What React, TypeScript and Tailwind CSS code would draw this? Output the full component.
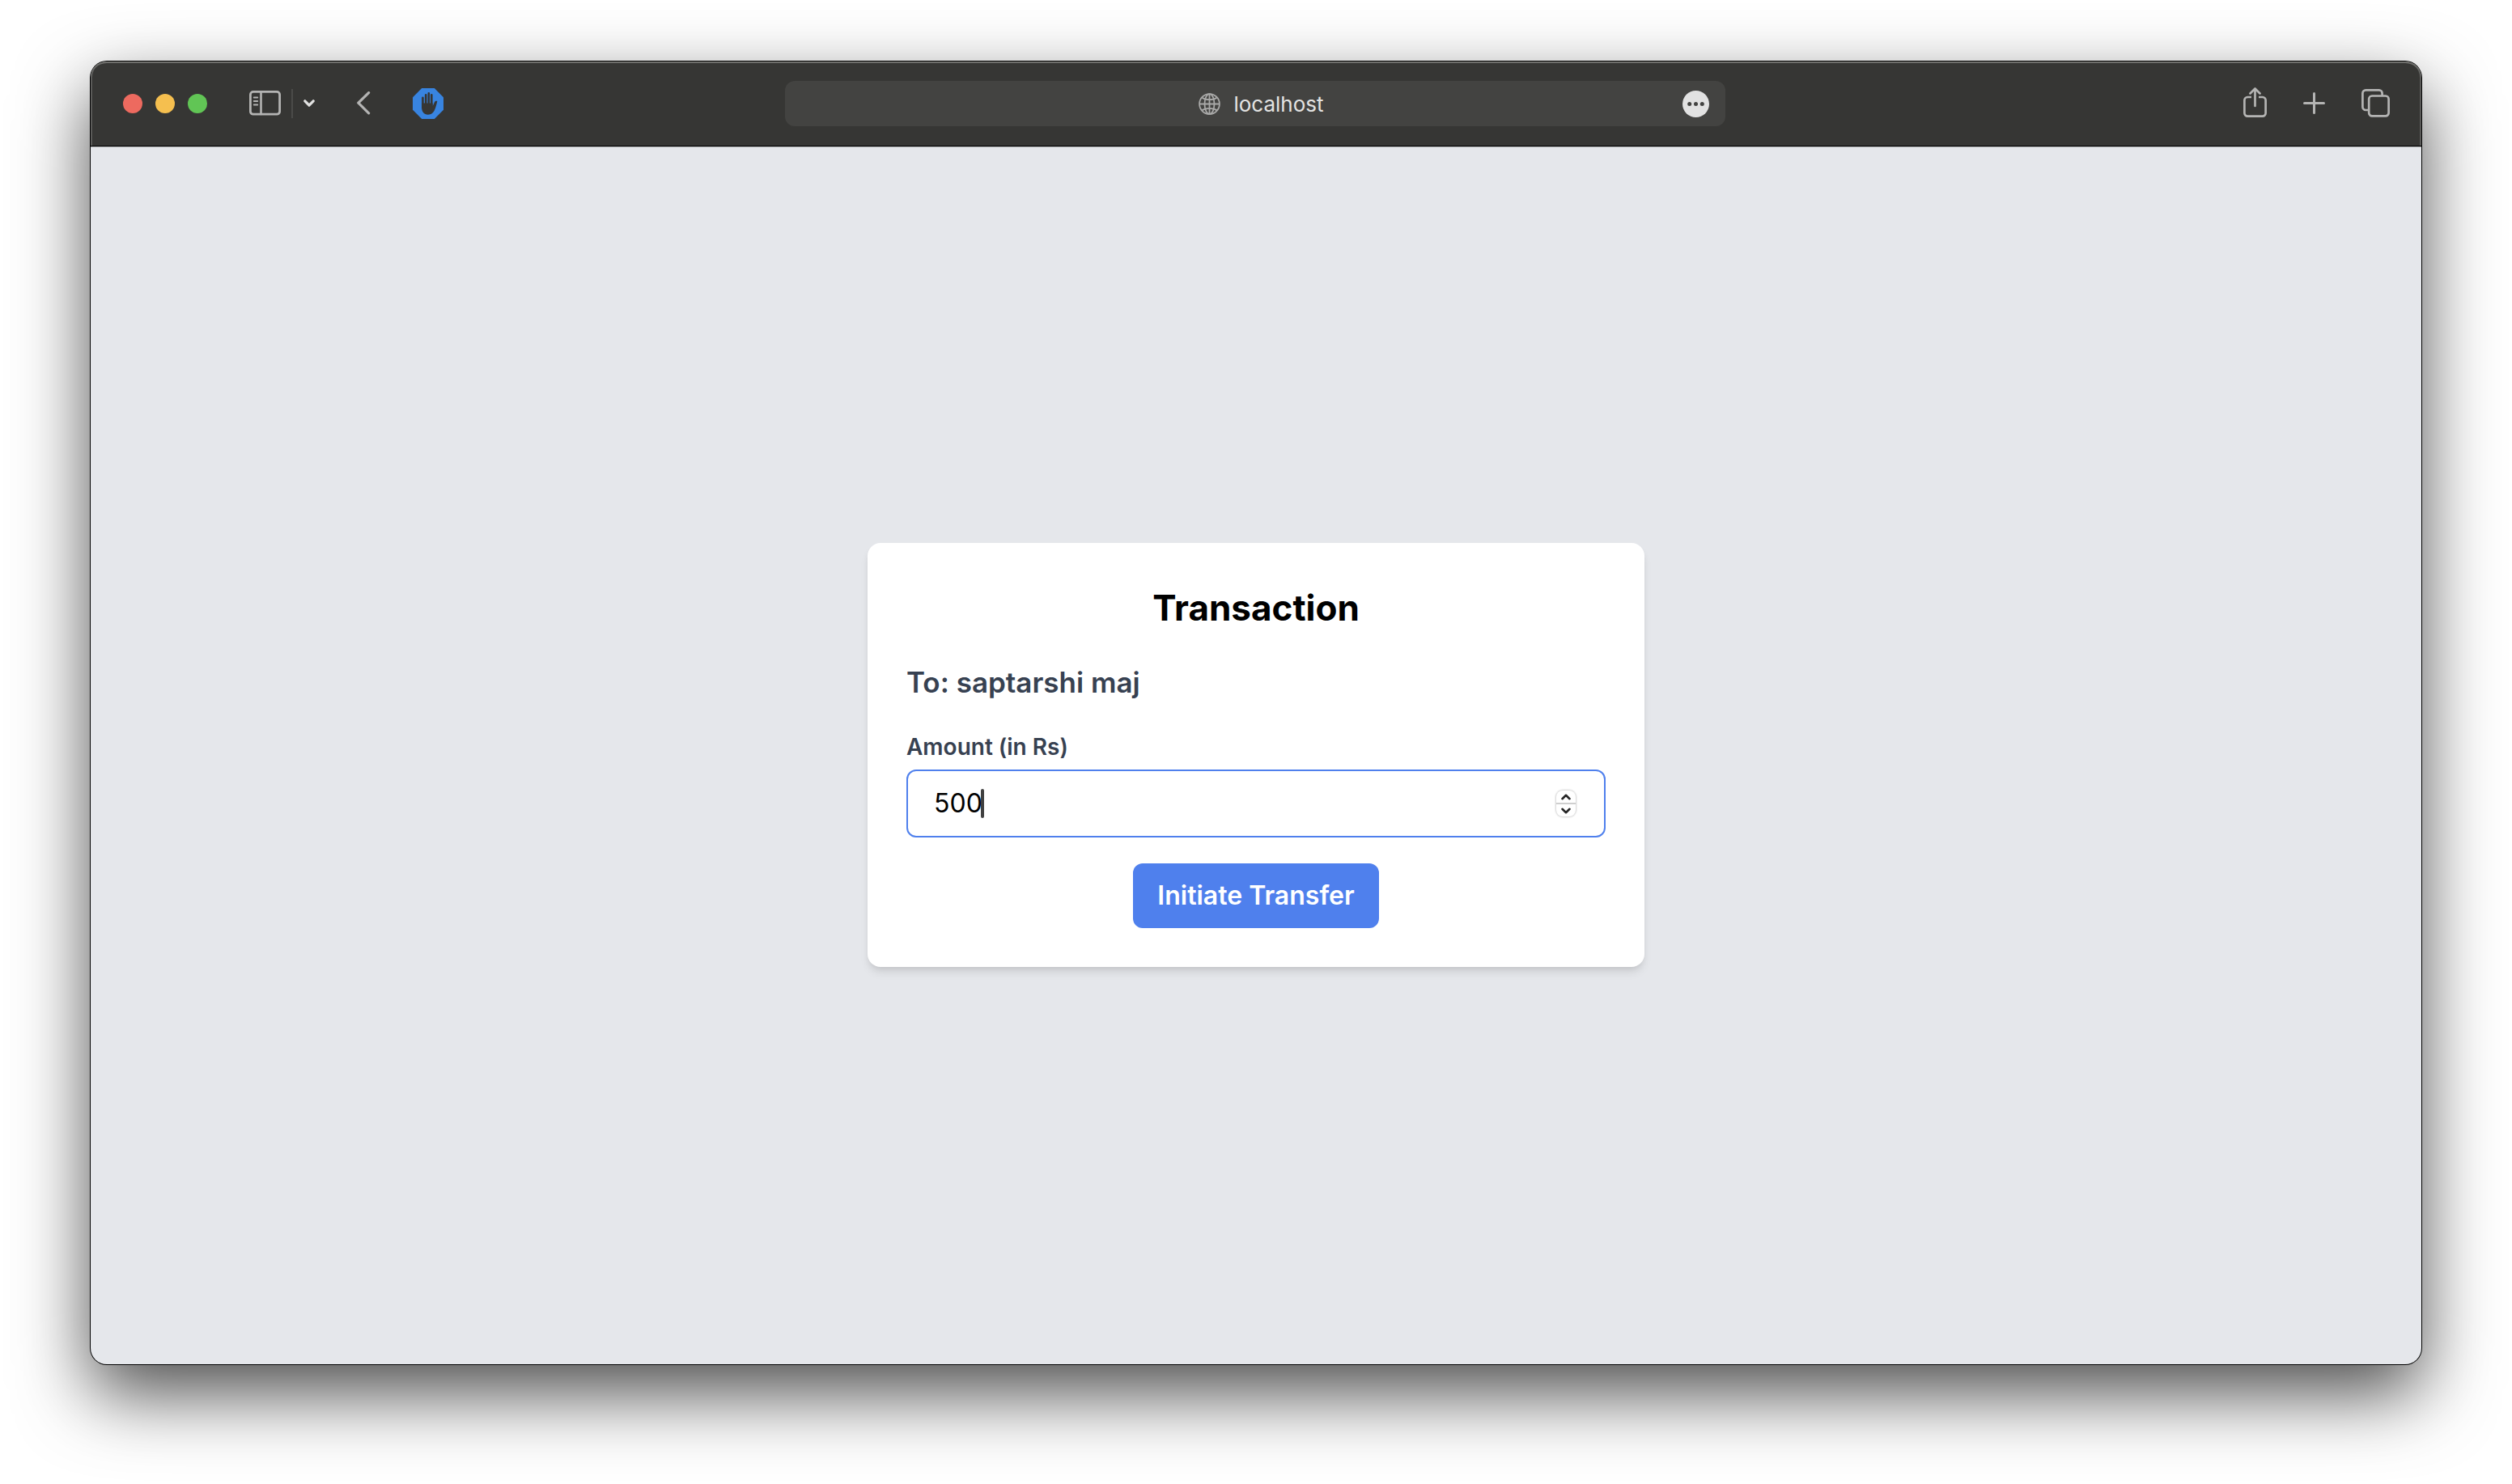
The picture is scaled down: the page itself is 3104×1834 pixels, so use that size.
import React, { useState } from "react";

function Toolbar() {
  return (
    <header className="flex h-[105px] shrink-0 items-center justify-between rounded-t-[20px] border-b border-black bg-[#363634] pr-[39px] pl-10 shadow-[inset_0_2px_0_#6f6f6c,inset_2px_0_0_#5a5a58,inset_-2px_0_0_#5a5a58]">
      <div className="flex flex-1 items-center">
        <div className="flex gap-4">
          <button aria-label="Close window" className="size-6 rounded-full bg-[#ed6a5f]" />
          <button aria-label="Minimize window" className="size-6 rounded-full bg-[#f5bf4f]" />
          <button aria-label="Zoom window" className="size-6 rounded-full bg-[#61c555]" />
        </div>
        <button aria-label="Show sidebar" className="ml-[52px]">
          <svg className="block" width="39" height="32" viewBox="0 0 39 32" fill="none" stroke="#b4b4b3" strokeLinecap="round">
            <rect x="1.4" y="1.4" width="36.2" height="27.8" rx="3.5" strokeWidth="2.8" />
            <path d="M14.5 2v27" strokeWidth="2.6" />
            <path d="M5.8 8.5h4.4M5.8 13h4.4M5.8 17.5h4.4" strokeWidth="2" />
          </svg>
        </button>
        <span className="ml-[13px] h-9 w-0.5 bg-[#4b4b49]" />
        <button aria-label="Tab groups" className="ml-[13px]">
          <svg className="block" width="14" height="10" viewBox="0 0 14 10" fill="none" stroke="#e2e2e1" strokeWidth="3.2" strokeLinecap="round" strokeLinejoin="round">
            <path d="M1.8 1.8 7 7.2l5.2-5.4" />
          </svg>
        </button>
        <button aria-label="Back" className="ml-[52px]">
          <svg className="block" width="17" height="30" viewBox="0 0 17 30" fill="none" stroke="#b4b4b3" strokeWidth="3.2" strokeLinecap="round" strokeLinejoin="round">
            <path d="M14.600 1.600 1.800 14.200l12.800 12.600" />
          </svg>
        </button>
        <button aria-label="Ad blocker" className="ml-[52px]">
          <svg className="block" width="38" height="38" viewBox="0 0 38 38">
            <path d="M11.200 0h15.600L38 11.200v15.600L26.800 38H11.200L0 26.800V11.200z" fill="#3884e0" />
            <path
              d="M12.400 11.800V24M16.200 8.300V22M19.800 6.300V22M23.300 8.200V24"
              stroke="#363634"
              strokeWidth="2.600"
              strokeLinecap="round"
              fill="none"
            />
            <path
              d="M11.100 18.500h13.500v3.800l2.200-4.900c.7-1.500 1.900-2.100 3.500-1.500-.7 3.500-1.700 7.300-3 10.400-1.600 3.900-4.300 6.400-8.400 6.400-4.900 0-7.800-3.600-7.800-8.700z"
              fill="#363634"
            />
          </svg>
        </button>
      </div>

      <div className="relative mr-1 flex h-14 w-[1162px] items-center justify-center rounded-xl bg-[#434341] pl-4">
        <div className="flex items-center gap-4">
          <svg width="27" height="27" viewBox="0 0 27 27" fill="none" stroke="#a9a9a8" strokeWidth="1.800">
            <circle cx="13.500" cy="13.500" r="12.400" />
            <ellipse cx="13.500" cy="13.500" rx="6" ry="12.400" />
            <path d="M13.500 1v25M1 13.500h25M4 5.500c5 3.600 14 3.600 19 0M4 21.500c5-3.600 14-3.600 19 0" />
          </svg>
          <span className="pt-0.5 text-[26px] leading-8 text-[#e3e3e2]">localhost</span>
        </div>
        <button aria-label="Page menu" className="absolute right-5">
          <svg className="block" width="33" height="33" viewBox="0 0 33 33">
            <circle cx="16.500" cy="16.500" r="16.500" fill="#e2e2e2" />
            <g fill="#434341">
              <circle cx="8.700" cy="16.500" r="2.500" />
              <circle cx="16.500" cy="16.500" r="2.500" />
              <circle cx="24.300" cy="16.500" r="2.500" />
            </g>
          </svg>
        </button>
      </div>

      <div className="flex flex-1 items-center justify-end gap-[45px]">
        <button aria-label="Share">
          <svg className="block" width="29" height="40" viewBox="0 0 29 40" fill="none" stroke="#b4b4b3" strokeWidth="2.700" strokeLinecap="round" strokeLinejoin="round">
            <path d="M10 12H5.200A3.800 3.800 0 0 0 1.400 15.800v16A3.800 3.800 0 0 0 5.200 35.600h18.600a3.800 3.800 0 0 0 3.800-3.800v-16A3.800 3.800 0 0 0 23.800 12H19" strokeLinecap="butt" />
            <path d="M14.500 23V1.800M8.500 7.500l6-6 6 6" />
          </svg>
        </button>
        <button aria-label="New tab">
          <svg className="block" width="27" height="29" viewBox="0 0 27 29" fill="none" stroke="#b4b4b3" strokeWidth="3" strokeLinecap="round">
            <path d="M13.500 1.500v24M1.500 13.500h24" />
          </svg>
        </button>
        <button aria-label="Show all tabs">
          <svg className="block" width="35" height="37" viewBox="0 0 35 37" fill="none" stroke="#b4b4b3" strokeWidth="2.700">
            <rect x="9.200" y="8.500" width="24.400" height="24.800" rx="3.800" />
            <path d="M9 26H5.200a3.800 3.800 0 0 1-3.800-3.800V5.200A3.800 3.800 0 0 1 5.200 1.400h16.600A3.800 3.800 0 0 1 25.600 5.200v3.300" />
          </svg>
        </button>
      </div>
    </header>
  );
}

function TransactionCard() {
  const [amount, setAmount] = useState(500);
  return (
    <form
      onSubmit={(e) => e.preventDefault()}
      className="flex w-1/3 flex-col rounded-2xl bg-white p-12 shadow-[0_8px_12px_-2px_rgba(0,0,0,0.1),0_4px_8px_-4px_rgba(0,0,0,0.1)]"
    >
      <h1 className="mb-8 text-center text-[44px] leading-16 font-bold text-black">Transaction</h1>
      <h2 className="mb-8 text-[35px] leading-14 font-semibold text-[#374151]">To: saptarshi maj</h2>
      <label htmlFor="amount" className="mb-2 text-[28px] leading-10 font-semibold text-[#374151]">
        Amount (in Rs)
      </label>
      <div className="relative mb-8 flex items-center rounded-xl border-2 border-[#4f80ed] py-4 pr-[35px] pl-8">
        <input
          id="amount"
          type="number"
          value={amount}
          onChange={(e) => setAmount(Number(e.target.value))}
          className="min-w-0 flex-1 appearance-none bg-transparent text-[32px] leading-12 text-black outline-none [appearance:textfield]"
        />
        <span className="absolute left-[90px] h-9 w-1 rounded-full bg-[#404040]" />
        <div className="flex h-8 w-6 flex-col overflow-hidden rounded-lg shadow-[0_0_2px_1px_rgba(0,0,0,0.18)]">
          <button type="button" aria-label="Increase amount" onClick={() => setAmount(amount + 1)} className="flex flex-1 items-center justify-center border-b border-[#cfcfcf]">
            <svg width="12" height="8" viewBox="0 0 12 8" fill="none" stroke="#262626" strokeWidth="2.600" strokeLinecap="round" strokeLinejoin="round">
              <path d="M1.500 6.200 6 1.800l4.500 4.400" />
            </svg>
          </button>
          <button type="button" aria-label="Decrease amount" onClick={() => setAmount(amount - 1)} className="flex flex-1 items-center justify-center border-t border-[#cfcfcf]">
            <svg width="12" height="8" viewBox="0 0 12 8" fill="none" stroke="#262626" strokeWidth="2.600" strokeLinecap="round" strokeLinejoin="round">
              <path d="M1.500 1.800 6 6.200l4.500-4.400" />
            </svg>
          </button>
        </div>
      </div>
      <button type="submit" className="self-center rounded-xl bg-[#4f80ed] px-[30px] py-4 text-[32px] leading-12 font-semibold text-white">
        Initiate Transfer
      </button>
    </form>
  );
}

export default function App() {
  return (
    <div className="flex h-screen flex-col overflow-hidden bg-white px-28 pt-[76px] pb-[148px] font-['Inter',sans-serif]">
      <div className="flex flex-1 flex-col rounded-[20px] bg-[#e5e7eb] shadow-[0_0_0_1px_#000,0_36px_90px_rgba(0,0,0,0.7)]">
        <Toolbar />
        <main className="flex flex-1 items-center justify-center pb-px shadow-[inset_0_1px_0_#a9aaac]">
          <TransactionCard />
        </main>
      </div>
    </div>
  );
}
